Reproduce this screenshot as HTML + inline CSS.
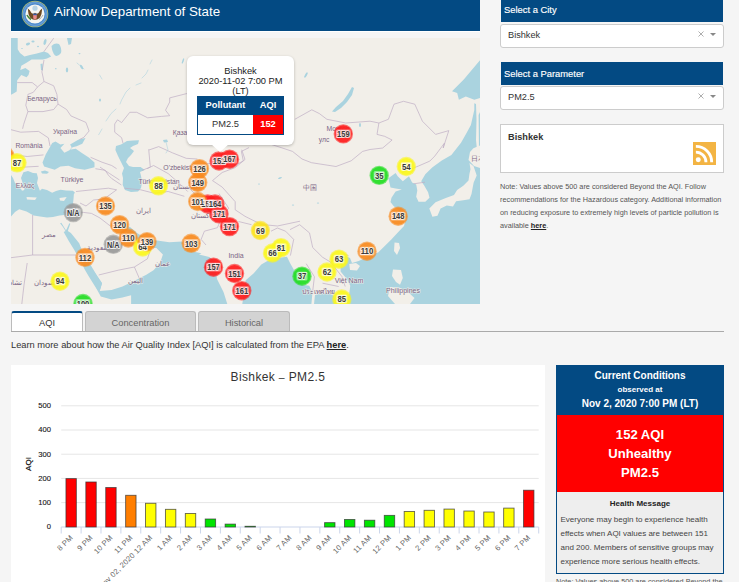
<!DOCTYPE html>
<html><head><meta charset="utf-8">
<style>
*{box-sizing:border-box;margin:0;padding:0}
html,body{width:739px;height:582px;overflow:hidden;background:#f5f5f5;font-family:"Liberation Sans",sans-serif;color:#333}
.abs{position:absolute}
#hdr{left:11px;top:0;width:469px;height:32px;background:#034a83;border-bottom:1px solid #fff}
#hdr .t{left:43px;top:4px;font-size:13.35px;color:#fff;white-space:nowrap;line-height:16px}
#map{left:11px;top:38px;width:469px;height:266px;overflow:hidden;background:#f2efe9}
.bh{background:#034a83;color:#fff;font-size:9.4px;line-height:12px;padding-left:3px;-webkit-text-stroke:0.15px #fff;white-space:nowrap}
.sel{background:#fff;border:1px solid #ccc;border-radius:3px;font-size:9.2px;color:#333;padding-left:7px;white-space:nowrap}
.note{font-size:7.3px;line-height:13px;color:#555;white-space:nowrap}
.tab{top:311px;height:21px;border:1px solid #bbb;border-bottom:none;border-radius:3px 3px 0 0;background:#d3d3d3;font-size:9.3px;color:#666;text-align:center;line-height:21px;padding-top:1px}
</style></head><body>
<div id="hdr" class="abs">
  <svg class="abs" style="left:9.5px;top:0.4px" width="28" height="28" viewBox="0 0 28 28">
    <circle cx="14" cy="14" r="13.3" fill="#b9c06a"/>
    <circle cx="14" cy="14" r="12.6" fill="#4a88cc"/>
    <circle cx="14" cy="14" r="11.3" fill="none" stroke="#6aa0d8" stroke-width="1.2"/>
    <circle cx="14" cy="14" r="9.6" fill="#f6f6f2"/>
    <circle cx="14" cy="8.2" r="2.6" fill="#b8d4e6"/>
    <path d="M6.8 8.5 Q9 9.5 10.5 13 Q12 14 13 13.5 L14 12.8 L15 13.5 Q16 14 17.5 13 Q19 9.5 21.2 8.5 Q21 14 19 17.5 Q17 19.5 14 20 Q11 19.5 9 17.5 Q7 14 6.8 8.5 Z" fill="#6e4a22"/>
    <path d="M12.2 14.2 h3.6 v3 q0 2 -1.8 2.6 q-1.8 -0.6 -1.8 -2.6 Z" fill="#e88a8a"/>
    <rect x="12.2" y="13.6" width="3.6" height="1.6" fill="#3a5aa0"/>
    <path d="M6 15 Q7.5 18 10 19.5" stroke="#4a8a3a" stroke-width="1.6" fill="none"/>
    <path d="M18 19.5 Q20.5 18 22 15" stroke="#aaa" stroke-width="1" fill="none"/>
  </svg>
  <div class="abs t">AirNow Department of State</div>
</div>

<div id="map" class="abs">
  <svg width="469" height="266" viewBox="11 38 469 266" style="display:block">
<g fill="#aad3df">
<path d="M11 38 L17.7 38 L17.7 49.3 L20 53 L24.4 56.6 L30 55 L36.8 53.5 L44 51.4 L48 53 L51.2 56.6 L47 58.5 L43 59.6 L31.6 59.6 L26.5 62.7 L21.3 65.8 L20.3 70 L25.4 67.9 L29.6 71 L28.5 75 L26.5 77.2 L21.3 75 L17.2 80.3 L16.7 91.6 L13 93.7 L11 94.7 Z"/>
<path d="M51.5 46 Q55 42.5 59 44 Q62 48 61 53 Q58 57 55 55.5 Q52 52 51.5 46 Z"/>
<path d="M67 38 L72 38 L71 44 L68.5 45 Z"/>
<path d="M40.5 64 L42.5 63.5 L43 70.5 L41 70 Z"/>
<path d="M55.5 141.4 L60.4 144.6 L64.4 143.8 L60.4 147.9 L64.4 152.7 L70.9 149.5 L75.8 148.7 L81.5 152.7 L88.8 157.6 L94.5 162.5 L94.5 167.3 L84.7 169.8 L75 168.2 L68.5 165.7 L60.4 166.5 L54.7 169.8 L44.1 166.5 L42.5 162.5 L45.7 154.4 L49 148.7 L52.2 143 Z"/>
<path d="M70.1 144.6 L78.2 139.7 L85.5 138.1 L82.3 143.8 L76.6 146.2 L71.7 147.5 Z"/>
<path d="M40.9 171.5 L45 170.6 L49 172 L47 173.8 L42 173.6 Z"/>
<path d="M11 175 L13 178 L15 183 L19.2 185.6 L22 190.8 L24.4 190 L23 184 L21 178 L23.4 172.2 L28 171 L33 173 L36.8 173.2 L38 178 L37 183 L39.9 190.8 L42 188.7 L47 190 L52.2 192.8 L56 191 L60.5 189.7 L66 190.5 L72.9 190.8 L75 192.8 L73.9 193.9 L73.5 199 L72.9 204.2 L71.5 210 L70.8 214.5 L68.7 214.5 L64 215 L59.5 215.5 L53 217 L47 217.6 L40 216.5 L33.7 215.5 L26.5 211.4 L19.2 209.3 L15 212 L11 216.5 Z"/>
<path d="M60.1 223.2 L63 227 L65.5 231 L63.7 232 L68.9 241.2 L74 249.5 L80 260 L85 270 L89 276.7 L97.1 289.7 L99.7 291 L102 283.2 L96 274 L90 264 L85 255 L81.2 248.5 L79.2 243.3 L70.9 233 L67.8 231 L70.3 223.7 L69.3 223.3 L66.5 229.5 L65.8 230 L61.3 222.8 Z"/>
<path d="M93 270 L102 283.2 L99.7 291 L111.6 289.9 L122.5 286.6 L135.5 280.2 L146.3 274.7 L153.9 270 L160.3 262.2 L162.9 254.5 L156.4 248 L150 248 L155.2 240.3 L169.3 242.2 L182.2 241.6 L195.1 251.9 L201.5 253.2 L199 254.5 L209.3 257 L214.4 260.9 L217 279 L223.5 291.9 L227.3 304 L131.1 304 L131.1 295.3 L122.5 297.5 L111.6 299.6 L100.8 296.4 L97.1 289.7 Z"/>
<path d="M124 225 L130 227 L137 233 L145 238 L152 240 L155.2 240.3 L150 245 L145 244 L138 243 L132 240 L127 233 Z"/>
<path d="M121 144.4 L127 141 L133 140.5 L139 140.3 L138 144 L133 146 L130 148 L134 151 L131 155 L128 158 L126 162 L129 166 L133 167 L140.6 167 L144.7 170 L140 172 L141 176 L142.2 182 L141 188 L138 191.5 L131 192 L125 190 L122.7 185 L123 178 L122 173.6 L124 168 L121 162 L118 156 L115.4 150 L116 146 Z"/>
<path d="M163 140 L167 139.5 L168 142 L164 142.5 Z"/>
<path d="M352 87 L354 88 L352 95 L347 102 L341 108 L335 112 L332 111.5 L336 107 L343 101 L348 94 Z"/>
<path d="M242.3 304 L245.7 280.2 L253.5 273.5 L261.3 264.6 L266.9 261.2 L277 258 L287 256.8 L290 263 L294 270 L297 275 L301.6 284.6 L309.2 285.7 L312.5 292.2 L311.4 304 Z"/>
<path d="M314 304 L315 295 L322 293 L330 293.5 L334 296 L337 304 Z"/>
<path d="M480 304 L347 304 L349.3 293.3 L350.3 285.7 L347 279.2 L340.6 271.6 L340.6 257.6 L345 256 L350 258 L352 263 L358.6 261 L365.8 257.7 L378.4 252.3 L391.1 239.7 L398.3 232 L404 226 L405.5 220 L401 213 L397.7 209.2 L393.6 206.1 L390.5 202 L391.5 197.8 L395.6 191.6 L401.8 189.6 L395.6 188.6 L390.5 187.5 L388.4 178.2 L395.6 173.1 L397.7 176.2 L402.8 181.3 L409 176.2 L412.1 182.4 L416.2 184.4 L417.3 190.6 L416.2 196.8 L418.5 201.8 L425.3 201.8 L429.5 197.7 L428.1 192.2 L424 185.3 L421.2 181.2 L425.3 174.3 L432.2 167.5 L441.8 160.6 L451.4 155.1 L461 142.7 L466 134 L470.9 125 L474.3 110 L474.3 103.2 L476 104 L476.5 120 L476 140 L477 150 L479 150 L478.6 115 L480 112 Z"/>
<path d="M480 60.3 L472.6 68.9 L464 79.2 L452 91.2 L457.2 92.9 L458.9 99.8 L465.8 96.4 L474.3 99.8 L480 98 Z"/>
</g>
<g fill="#f2efe9">
<path d="M430.3 207.4 L435.5 202.3 L445.8 198.1 L454 195 L457.1 189.9 L463.3 185.8 L468.5 180.6 L469.5 173.4 L470.5 169.3 L469.5 163.1 L473.6 166.2 L476.7 175.5 L473.6 182.7 L471.5 194 L469.5 199.2 L463.3 200.2 L456.1 201.2 L453 206.4 L446.8 205.4 L440.6 208.5 L437.5 215.7 L432.4 216.7 L429.3 208.5 Z"/>
<path d="M468.5 160 L470 152 L473.4 148.2 L480 145.5 L480 168 L474 166 Z"/>
<path d="M394.5 242.4 L399 243 L400.1 248 L397 255 L394 251 Z"/>
<path d="M393 269.4 L401 270 L402.8 278 L400 284.8 L396 282 L392 276 Z"/>
<path d="M390 287 L400 288 L408 292 L414.5 298 L410 304 L395 304 L388 296 Z"/>
<path d="M349.3 264 L356 263 L360 266 L357 270.6 L350 270 Z"/>
<path d="M26.5 197 L36.8 197.5 L35 200 L27 199.5 Z"/>
<path d="M59.5 198 L66.7 197 L64 201 L60 200.5 Z"/>
</g>

<g fill="none" stroke="#bfaec4" stroke-width="0.7" stroke-linejoin="round">
<polyline points="53.7,38.2 44,51.5"/>
<polyline points="44,60 41.9,71.9 44,81.5 37.6,86.9"/>
<polyline points="17.2,82.6 32.2,82.6 37.6,86.9"/>
<polyline points="37.6,86.9 33.3,92.3 27.9,94.4"/>
<polyline points="44,81.5 53.7,85.8 56.9,94.4 58,104.1"/>
<polyline points="27.9,94.4 25.8,105.2 27.9,111.6"/>
<polyline points="27.9,111.6 43,111.6 53.7,109.5 58,104.1"/>
<polyline points="58,104.1 66.6,109.5 70.9,115.9 85.9,122.4 89.1,131 83.8,137.4 79.5,139.5"/>
<polyline points="27.9,111.6 23.6,124.5 22.6,128.8"/>
<polyline points="11,129.7 20.7,132.2 38.6,131.4 48.4,137.9 50,146"/>
<polyline points="14.2,154.9 27.2,156.5 43.5,154.9"/>
<polyline points="90.6,157.3 102,162.2 111.7,165.5 116.6,168.7"/>
<polyline points="95.4,168.7 105.2,170.3 108.4,175.2 111.7,178.5 121.4,185"/>
<polyline points="76,191.5 92.2,189.8 108.4,188.2 116.6,189.8"/>
<polyline points="14.2,168.7 24,167.1 38.6,166.3"/>
<polyline points="123,143.2 121.6,137.7 114.7,132.2 114.7,124 117.5,119.8 121.6,122.6 129.8,112.3 136.7,112.3 147.7,117.8 161.4,116.4 169.7,115.7 165.5,110.2 169.7,102 169.7,97.9 186.2,93.7 200,92"/>
<polyline points="149,150 158.7,146.6 172.4,152.8 186.2,158.3 197.4,159"/>
<polyline points="148.7,149.2 150.3,167.1 142.2,170.3"/>
<polyline points="147.1,168.7 153.6,165.5 168.2,173.6 181.2,185 187.7,191.5"/>
<polyline points="124.4,188.2 140.6,189.8 153.6,193.1 168.2,191.5 184.4,196.3"/>
<polyline points="100,167.1 109.7,173.6 119.5,180"/>
<polyline points="202.7,164.4 215.7,162.7 228.7,162.7"/>
<polyline points="241.7,149.7 245,159.5 235.2,167.6 222.2,172.5 212.5,180.6 222.2,187.1 235.2,201.7 235.2,209.8 245,216.3 261.2,224.4 277.4,226 300,221.2"/>
<polyline points="180,185.5 189.7,188.7 197.9,196.8"/>
<polyline points="219,193.6 228.7,208.2 222.2,216.3 217.4,227.7 204.4,231.2 201.1,239.4 206,245"/>
<polyline points="238.5,221.5 251.5,224.7"/>
<polyline points="271,231.2 277.4,228 285.6,231.2 293.7,239.4 290.4,255.6"/>
<polyline points="290,229.6 299.7,224.7 309.5,232.9 312.7,247.5 322.5,257.2 330.6,262.1 343.6,254 348.5,255.6"/>
<polyline points="306.2,263.7 314.4,276.7 312.7,291.3"/>
<polyline points="330.6,262.1 342,276.7 345.2,286.5"/>
<polyline points="322.5,283.2 338.7,286.5"/>
<polyline points="11,257.7 32.6,255 76,255"/>
<polyline points="32.6,215 32.6,255"/>
<polyline points="27.2,263 24,285 21.8,304"/>
<polyline points="80,203 86,206 93.6,200 104,199 116.6,189.8"/>
<polyline points="76,212 83.3,212.4 91.5,213.4 100,218 110,225.8 118,230"/>
<polyline points="98.7,275 118.2,270.2 134.4,267 147.4,258.8 150.7,249.1"/>
<polyline points="134.4,267 139.3,278.3"/>
<polyline points="294.8,119.3 311.8,109.8 319.4,113.6 326.9,119.3 345.8,123 370,121.2 378.9,123 388.4,119.3 394,104.2 403.5,101.3 414.8,104.2 422.4,121.2 435.6,134.4 448.8,130.6 443.2,148 444.4,143.2"/>
<polyline points="378.9,123 377,134.4 384.6,136.3 392.1,140 382.7,148 370,149.5 362.6,151.4 351.2,160.8 336,166.5 311.5,162.7 302,159 292.5,151.4 281.1,147.6 270,144"/>
<polyline points="249,147.6 241.4,151.4 243.3,160.8 230,168.4"/>
<polyline points="402.2,172.5 418.5,166 429.8,161.1 434.7,156.2 444.4,143.2"/>
<polyline points="413.6,183.8 425,182.2"/>
</g>
<g fill="none" stroke="#aad3df" stroke-width="0.7" stroke-opacity="0.8" stroke-linecap="round">
<polyline points="98.7,134.7 102,129"/>
<polyline points="106,121 111,113.6 116,109"/>
<polyline points="120,104 121.6,100 126,92 130,88"/>
<polyline points="136,85 141,83"/>
<polyline points="142,78 146,74 148,70"/>
<polyline points="150,64 152,60"/>
<polyline points="77,63 84,69"/>
<polyline points="99.6,75 102,79"/>
<polyline points="70,150 76,142"/>
<polyline points="166,142 168,150 166,153"/>
</g>
<g fill="#aad3df">
<ellipse cx="28" cy="44" rx="2.2" ry="1.2" transform="rotate(-20 28 44)"/>
<ellipse cx="33" cy="41.5" rx="1.6" ry="1" transform="rotate(0 33 41.5)"/>
<ellipse cx="45" cy="42" rx="1.4" ry="3" transform="rotate(15 45 42)"/>
<ellipse cx="38" cy="46.5" rx="1" ry="0.8" transform="rotate(0 38 46.5)"/>
<ellipse cx="22" cy="48.5" rx="0.8" ry="0.6" transform="rotate(0 22 48.5)"/>
<ellipse cx="12.5" cy="54.5" rx="1.5" ry="0.8" transform="rotate(0 12.5 54.5)"/>
<ellipse cx="79.5" cy="53.6" rx="1" ry="0.7" transform="rotate(0 79.5 53.6)"/>
<ellipse cx="81.6" cy="67" rx="1.2" ry="2.5" transform="rotate(-30 81.6 67)"/>
<ellipse cx="55.8" cy="68.7" rx="0.8" ry="0.6" transform="rotate(0 55.8 68.7)"/>
<ellipse cx="67" cy="70" rx="1.2" ry="2.4" transform="rotate(0 67 70)"/>
<ellipse cx="100" cy="100" rx="1" ry="1.5" transform="rotate(0 100 100)"/>
<ellipse cx="183" cy="61" rx="0.8" ry="2.8" transform="rotate(20 183 61)"/>
<ellipse cx="250" cy="63" rx="0.8" ry="2.5" transform="rotate(-20 250 63)"/>
<ellipse cx="306" cy="75" rx="1" ry="3" transform="rotate(30 306 75)"/>
<ellipse cx="360" cy="125" rx="1" ry="2" transform="rotate(0 360 125)"/>
<ellipse cx="280" cy="178" rx="2" ry="0.8" transform="rotate(-20 280 178)"/>
<ellipse cx="293" cy="205" rx="1.2" ry="0.6" transform="rotate(0 293 205)"/>
<ellipse cx="318" cy="203" rx="1.2" ry="0.6" transform="rotate(0 318 203)"/>
<ellipse cx="259" cy="184" rx="1" ry="0.6" transform="rotate(0 259 184)"/>
</g>
<g font-family="Liberation Sans" fill="#7b6585" text-anchor="middle" stroke="#f2efe9" stroke-width="1.2" paint-order="stroke" stroke-opacity="0.8">
<text x="42" y="101" font-size="6.8">Беларусь</text>
<text x="65" y="134" font-size="6.8">Україна</text>
<text x="29" y="147.5" font-size="6.8">România</text>
<text x="72" y="182" font-size="7">Türkiye</text>
<text x="25" y="188" font-size="6.8">Ελλάς</text>
<text x="180" y="135" font-size="6.8">Қаза</text>
<text x="181" y="170" font-size="6.8">O'zbekiston</text>
<text x="159" y="184" font-size="6.8">Türkmenistan</text>
<text x="143" y="213" font-size="6.8">ایران</text>
<text x="49" y="237" font-size="6.8">مصر</text>
<text x="100" y="250" font-size="6.8">السعودية</text>
<text x="162" y="266" font-size="6.8">عمان</text>
<text x="135" y="283" font-size="6.8">اليمن</text>
<text x="46" y="285" font-size="6.8">السودان</text>
<text x="15" y="285" font-size="6.8">تشاد</text>
<text x="186" y="189" font-size="6.8">افغانستان</text>
<text x="202" y="218" font-size="6.8">پاکستان</text>
<text x="236" y="257.5" font-size="7">India</text>
<text x="310" y="189.5" font-size="7">中国</text>
<text x="338" y="131" font-size="6.8">Монгол</text>
<text x="324" y="141.5" font-size="6.8">улс</text>
<text x="349" y="283" font-size="7">Việt Nam</text>
<text x="318" y="293.5" font-size="6.8">ประเทศไทย</text>
<text x="403" y="292.5" font-size="7">Philippines</text>
<text x="478" y="161" font-size="7">日本</text>
</g>
<g>
<circle cx="5" cy="156" r="9.7" fill="#f98a1e" fill-opacity="0.6"/><circle cx="5" cy="156" r="8.6" fill="#f98a1e" fill-opacity="0.8"/>
<circle cx="17" cy="162.8" r="9.7" fill="#fbf71c" fill-opacity="0.6"/><circle cx="17" cy="162.8" r="8.6" fill="#fbf71c" fill-opacity="0.8"/>
<circle cx="105.5" cy="206" r="9.7" fill="#f98a1e" fill-opacity="0.6"/><circle cx="105.5" cy="206" r="8.6" fill="#f98a1e" fill-opacity="0.8"/>
<circle cx="73.3" cy="212.6" r="9.7" fill="#9a9a9a" fill-opacity="0.6"/><circle cx="73.3" cy="212.6" r="8.6" fill="#9a9a9a" fill-opacity="0.8"/>
<circle cx="119.6" cy="224.7" r="9.7" fill="#f98a1e" fill-opacity="0.6"/><circle cx="119.6" cy="224.7" r="8.6" fill="#f98a1e" fill-opacity="0.8"/>
<circle cx="113.3" cy="244.3" r="9.7" fill="#9a9a9a" fill-opacity="0.6"/><circle cx="113.3" cy="244.3" r="8.6" fill="#9a9a9a" fill-opacity="0.8"/>
<circle cx="128.3" cy="238" r="9.7" fill="#f98a1e" fill-opacity="0.6"/><circle cx="128.3" cy="238" r="8.6" fill="#f98a1e" fill-opacity="0.8"/>
<circle cx="142.6" cy="247" r="9.7" fill="#fbf71c" fill-opacity="0.6"/><circle cx="142.6" cy="247" r="8.6" fill="#fbf71c" fill-opacity="0.8"/>
<circle cx="147" cy="241.7" r="9.7" fill="#f98a1e" fill-opacity="0.6"/><circle cx="147" cy="241.7" r="8.6" fill="#f98a1e" fill-opacity="0.8"/>
<circle cx="85" cy="257.4" r="9.7" fill="#f98a1e" fill-opacity="0.6"/><circle cx="85" cy="257.4" r="8.6" fill="#f98a1e" fill-opacity="0.8"/>
<circle cx="60" cy="281.2" r="9.7" fill="#fbf71c" fill-opacity="0.6"/><circle cx="60" cy="281.2" r="8.6" fill="#fbf71c" fill-opacity="0.8"/>
<circle cx="83" cy="303.5" r="9.7" fill="#22dd22" fill-opacity="0.6"/><circle cx="83" cy="303.5" r="8.6" fill="#22dd22" fill-opacity="0.8"/>
<circle cx="158.5" cy="185.8" r="9.7" fill="#fbf71c" fill-opacity="0.6"/><circle cx="158.5" cy="185.8" r="8.6" fill="#fbf71c" fill-opacity="0.8"/>
<circle cx="199.5" cy="168.7" r="9.7" fill="#f98a1e" fill-opacity="0.6"/><circle cx="199.5" cy="168.7" r="8.6" fill="#f98a1e" fill-opacity="0.8"/>
<circle cx="197.7" cy="182.5" r="9.7" fill="#f98a1e" fill-opacity="0.6"/><circle cx="197.7" cy="182.5" r="8.6" fill="#f98a1e" fill-opacity="0.8"/>
<circle cx="207.6" cy="204" r="9.7" fill="#ff1a1a" fill-opacity="0.6"/><circle cx="207.6" cy="204" r="8.6" fill="#ff1a1a" fill-opacity="0.8"/>
<circle cx="197.7" cy="201.5" r="9.7" fill="#f98a1e" fill-opacity="0.6"/><circle cx="197.7" cy="201.5" r="8.6" fill="#f98a1e" fill-opacity="0.8"/>
<circle cx="229.5" cy="226.6" r="9.7" fill="#ff1a1a" fill-opacity="0.6"/><circle cx="229.5" cy="226.6" r="8.6" fill="#ff1a1a" fill-opacity="0.8"/>
<circle cx="219" cy="213.9" r="9.7" fill="#ff1a1a" fill-opacity="0.6"/><circle cx="219" cy="213.9" r="8.6" fill="#ff1a1a" fill-opacity="0.8"/>
<circle cx="215" cy="204" r="9.7" fill="#ff1a1a" fill-opacity="0.6"/><circle cx="215" cy="204" r="8.6" fill="#ff1a1a" fill-opacity="0.8"/>
<circle cx="219" cy="161" r="9.7" fill="#ff1a1a" fill-opacity="0.6"/><circle cx="219" cy="161" r="8.6" fill="#ff1a1a" fill-opacity="0.8"/>
<circle cx="229.5" cy="159.2" r="9.7" fill="#ff1a1a" fill-opacity="0.6"/><circle cx="229.5" cy="159.2" r="8.6" fill="#ff1a1a" fill-opacity="0.8"/>
<circle cx="260.4" cy="230.5" r="9.7" fill="#fde21a" fill-opacity="0.6"/><circle cx="260.4" cy="230.5" r="8.6" fill="#fde21a" fill-opacity="0.8"/>
<circle cx="191.2" cy="243.3" r="9.7" fill="#f98a1e" fill-opacity="0.6"/><circle cx="191.2" cy="243.3" r="8.6" fill="#f98a1e" fill-opacity="0.8"/>
<circle cx="213.5" cy="267.2" r="9.7" fill="#ff1a1a" fill-opacity="0.6"/><circle cx="213.5" cy="267.2" r="8.6" fill="#ff1a1a" fill-opacity="0.8"/>
<circle cx="234.5" cy="273.5" r="9.7" fill="#ff1a1a" fill-opacity="0.6"/><circle cx="234.5" cy="273.5" r="8.6" fill="#ff1a1a" fill-opacity="0.8"/>
<circle cx="241.8" cy="290.7" r="9.7" fill="#ff1a1a" fill-opacity="0.6"/><circle cx="241.8" cy="290.7" r="8.6" fill="#ff1a1a" fill-opacity="0.8"/>
<circle cx="281" cy="247.6" r="9.7" fill="#fbf71c" fill-opacity="0.6"/><circle cx="281" cy="247.6" r="8.6" fill="#fbf71c" fill-opacity="0.8"/>
<circle cx="272.5" cy="253" r="9.7" fill="#fbf71c" fill-opacity="0.6"/><circle cx="272.5" cy="253" r="8.6" fill="#fbf71c" fill-opacity="0.8"/>
<circle cx="302" cy="276.2" r="9.7" fill="#22dd22" fill-opacity="0.6"/><circle cx="302" cy="276.2" r="8.6" fill="#22dd22" fill-opacity="0.8"/>
<circle cx="339" cy="259.2" r="9.7" fill="#fbf71c" fill-opacity="0.6"/><circle cx="339" cy="259.2" r="8.6" fill="#fbf71c" fill-opacity="0.8"/>
<circle cx="327" cy="272" r="9.7" fill="#fbf71c" fill-opacity="0.6"/><circle cx="327" cy="272" r="8.6" fill="#fbf71c" fill-opacity="0.8"/>
<circle cx="341.8" cy="299" r="9.7" fill="#fbf71c" fill-opacity="0.6"/><circle cx="341.8" cy="299" r="8.6" fill="#fbf71c" fill-opacity="0.8"/>
<circle cx="367" cy="251.2" r="9.7" fill="#f98a1e" fill-opacity="0.6"/><circle cx="367" cy="251.2" r="8.6" fill="#f98a1e" fill-opacity="0.8"/>
<circle cx="398.2" cy="216.2" r="9.7" fill="#f98a1e" fill-opacity="0.6"/><circle cx="398.2" cy="216.2" r="8.6" fill="#f98a1e" fill-opacity="0.8"/>
<circle cx="379.2" cy="175.4" r="9.7" fill="#22dd22" fill-opacity="0.6"/><circle cx="379.2" cy="175.4" r="8.6" fill="#22dd22" fill-opacity="0.8"/>
<circle cx="406.3" cy="166.5" r="9.7" fill="#fbf71c" fill-opacity="0.6"/><circle cx="406.3" cy="166.5" r="8.6" fill="#fbf71c" fill-opacity="0.8"/>
<circle cx="343.3" cy="133.9" r="9.7" fill="#ff1a1a" fill-opacity="0.6"/><circle cx="343.3" cy="133.9" r="8.6" fill="#ff1a1a" fill-opacity="0.8"/>
</g>
<g font-family="Liberation Sans" font-weight="bold" text-anchor="middle">
<rect x="-0.50" y="151.60" width="11.00" height="8.6" rx="1.5" fill="#fff" fill-opacity="0.45"/>
<text x="5" y="159.2" font-size="9" textLength="8.6" lengthAdjust="spacingAndGlyphs" fill="#3a3a3a" stroke="#fff" stroke-width="1.8" stroke-opacity="0.7" paint-order="stroke">85</text>
<rect x="11.50" y="158.40" width="11.00" height="8.6" rx="1.5" fill="#fff" fill-opacity="0.45"/>
<text x="17" y="166.0" font-size="9" textLength="8.6" lengthAdjust="spacingAndGlyphs" fill="#3a3a3a" stroke="#fff" stroke-width="1.8" stroke-opacity="0.7" paint-order="stroke">87</text>
<rect x="98.00" y="201.60" width="15.00" height="8.6" rx="1.5" fill="#fff" fill-opacity="0.45"/>
<text x="105.5" y="209.2" font-size="9" textLength="12.6" lengthAdjust="spacingAndGlyphs" fill="#3a3a3a" stroke="#fff" stroke-width="1.8" stroke-opacity="0.7" paint-order="stroke">135</text>
<rect x="65.80" y="208.20" width="15.00" height="8.6" rx="1.5" fill="#fff" fill-opacity="0.45"/>
<text x="73.3" y="215.79999999999998" font-size="9" textLength="12.6" lengthAdjust="spacingAndGlyphs" fill="#3a3a3a" stroke="#fff" stroke-width="1.8" stroke-opacity="0.7" paint-order="stroke">N/A</text>
<rect x="112.10" y="220.30" width="15.00" height="8.6" rx="1.5" fill="#fff" fill-opacity="0.45"/>
<text x="119.6" y="227.89999999999998" font-size="9" textLength="12.6" lengthAdjust="spacingAndGlyphs" fill="#3a3a3a" stroke="#fff" stroke-width="1.8" stroke-opacity="0.7" paint-order="stroke">120</text>
<rect x="105.80" y="239.90" width="15.00" height="8.6" rx="1.5" fill="#fff" fill-opacity="0.45"/>
<text x="113.3" y="247.5" font-size="9" textLength="12.6" lengthAdjust="spacingAndGlyphs" fill="#3a3a3a" stroke="#fff" stroke-width="1.8" stroke-opacity="0.7" paint-order="stroke">N/A</text>
<rect x="120.80" y="233.60" width="15.00" height="8.6" rx="1.5" fill="#fff" fill-opacity="0.45"/>
<text x="128.3" y="241.2" font-size="9" textLength="12.6" lengthAdjust="spacingAndGlyphs" fill="#3a3a3a" stroke="#fff" stroke-width="1.8" stroke-opacity="0.7" paint-order="stroke">110</text>
<rect x="137.10" y="242.60" width="11.00" height="8.6" rx="1.5" fill="#fff" fill-opacity="0.45"/>
<text x="142.6" y="250.2" font-size="9" textLength="8.6" lengthAdjust="spacingAndGlyphs" fill="#3a3a3a" stroke="#fff" stroke-width="1.8" stroke-opacity="0.7" paint-order="stroke">64</text>
<rect x="139.50" y="237.30" width="15.00" height="8.6" rx="1.5" fill="#fff" fill-opacity="0.45"/>
<text x="147" y="244.89999999999998" font-size="9" textLength="12.6" lengthAdjust="spacingAndGlyphs" fill="#3a3a3a" stroke="#fff" stroke-width="1.8" stroke-opacity="0.7" paint-order="stroke">139</text>
<rect x="77.50" y="253.00" width="15.00" height="8.6" rx="1.5" fill="#fff" fill-opacity="0.45"/>
<text x="85" y="260.59999999999997" font-size="9" textLength="12.6" lengthAdjust="spacingAndGlyphs" fill="#3a3a3a" stroke="#fff" stroke-width="1.8" stroke-opacity="0.7" paint-order="stroke">112</text>
<rect x="54.50" y="276.80" width="11.00" height="8.6" rx="1.5" fill="#fff" fill-opacity="0.45"/>
<text x="60" y="284.4" font-size="9" textLength="8.6" lengthAdjust="spacingAndGlyphs" fill="#3a3a3a" stroke="#fff" stroke-width="1.8" stroke-opacity="0.7" paint-order="stroke">94</text>
<rect x="75.50" y="299.10" width="15.00" height="8.6" rx="1.5" fill="#fff" fill-opacity="0.45"/>
<text x="83" y="306.7" font-size="9" textLength="12.6" lengthAdjust="spacingAndGlyphs" fill="#3a3a3a" stroke="#fff" stroke-width="1.8" stroke-opacity="0.7" paint-order="stroke">100</text>
<rect x="153.00" y="181.40" width="11.00" height="8.6" rx="1.5" fill="#fff" fill-opacity="0.45"/>
<text x="158.5" y="189.0" font-size="9" textLength="8.6" lengthAdjust="spacingAndGlyphs" fill="#3a3a3a" stroke="#fff" stroke-width="1.8" stroke-opacity="0.7" paint-order="stroke">88</text>
<rect x="192.00" y="164.30" width="15.00" height="8.6" rx="1.5" fill="#fff" fill-opacity="0.45"/>
<text x="199.5" y="171.89999999999998" font-size="9" textLength="12.6" lengthAdjust="spacingAndGlyphs" fill="#3a3a3a" stroke="#fff" stroke-width="1.8" stroke-opacity="0.7" paint-order="stroke">126</text>
<rect x="190.20" y="178.10" width="15.00" height="8.6" rx="1.5" fill="#fff" fill-opacity="0.45"/>
<text x="197.7" y="185.7" font-size="9" textLength="12.6" lengthAdjust="spacingAndGlyphs" fill="#3a3a3a" stroke="#fff" stroke-width="1.8" stroke-opacity="0.7" paint-order="stroke">149</text>
<rect x="200.10" y="199.60" width="15.00" height="8.6" rx="1.5" fill="#fff" fill-opacity="0.45"/>
<text x="207.6" y="207.2" font-size="9" textLength="12.6" lengthAdjust="spacingAndGlyphs" fill="#3a3a3a" stroke="#fff" stroke-width="1.8" stroke-opacity="0.7" paint-order="stroke">151</text>
<rect x="190.20" y="197.10" width="15.00" height="8.6" rx="1.5" fill="#fff" fill-opacity="0.45"/>
<text x="197.7" y="204.7" font-size="9" textLength="12.6" lengthAdjust="spacingAndGlyphs" fill="#3a3a3a" stroke="#fff" stroke-width="1.8" stroke-opacity="0.7" paint-order="stroke">101</text>
<rect x="222.00" y="222.20" width="15.00" height="8.6" rx="1.5" fill="#fff" fill-opacity="0.45"/>
<text x="229.5" y="229.79999999999998" font-size="9" textLength="12.6" lengthAdjust="spacingAndGlyphs" fill="#3a3a3a" stroke="#fff" stroke-width="1.8" stroke-opacity="0.7" paint-order="stroke">171</text>
<rect x="211.50" y="209.50" width="15.00" height="8.6" rx="1.5" fill="#fff" fill-opacity="0.45"/>
<text x="219" y="217.1" font-size="9" textLength="12.6" lengthAdjust="spacingAndGlyphs" fill="#3a3a3a" stroke="#fff" stroke-width="1.8" stroke-opacity="0.7" paint-order="stroke">171</text>
<rect x="207.50" y="199.60" width="15.00" height="8.6" rx="1.5" fill="#fff" fill-opacity="0.45"/>
<text x="215" y="207.2" font-size="9" textLength="12.6" lengthAdjust="spacingAndGlyphs" fill="#3a3a3a" stroke="#fff" stroke-width="1.8" stroke-opacity="0.7" paint-order="stroke">164</text>
<rect x="211.50" y="156.60" width="15.00" height="8.6" rx="1.5" fill="#fff" fill-opacity="0.45"/>
<text x="219" y="164.2" font-size="9" textLength="12.6" lengthAdjust="spacingAndGlyphs" fill="#3a3a3a" stroke="#fff" stroke-width="1.8" stroke-opacity="0.7" paint-order="stroke">151</text>
<rect x="222.00" y="154.80" width="15.00" height="8.6" rx="1.5" fill="#fff" fill-opacity="0.45"/>
<text x="229.5" y="162.39999999999998" font-size="9" textLength="12.6" lengthAdjust="spacingAndGlyphs" fill="#3a3a3a" stroke="#fff" stroke-width="1.8" stroke-opacity="0.7" paint-order="stroke">167</text>
<rect x="254.90" y="226.10" width="11.00" height="8.6" rx="1.5" fill="#fff" fill-opacity="0.45"/>
<text x="260.4" y="233.7" font-size="9" textLength="8.6" lengthAdjust="spacingAndGlyphs" fill="#3a3a3a" stroke="#fff" stroke-width="1.8" stroke-opacity="0.7" paint-order="stroke">69</text>
<rect x="183.70" y="238.90" width="15.00" height="8.6" rx="1.5" fill="#fff" fill-opacity="0.45"/>
<text x="191.2" y="246.5" font-size="9" textLength="12.6" lengthAdjust="spacingAndGlyphs" fill="#3a3a3a" stroke="#fff" stroke-width="1.8" stroke-opacity="0.7" paint-order="stroke">103</text>
<rect x="206.00" y="262.80" width="15.00" height="8.6" rx="1.5" fill="#fff" fill-opacity="0.45"/>
<text x="213.5" y="270.4" font-size="9" textLength="12.6" lengthAdjust="spacingAndGlyphs" fill="#3a3a3a" stroke="#fff" stroke-width="1.8" stroke-opacity="0.7" paint-order="stroke">157</text>
<rect x="227.00" y="269.10" width="15.00" height="8.6" rx="1.5" fill="#fff" fill-opacity="0.45"/>
<text x="234.5" y="276.7" font-size="9" textLength="12.6" lengthAdjust="spacingAndGlyphs" fill="#3a3a3a" stroke="#fff" stroke-width="1.8" stroke-opacity="0.7" paint-order="stroke">151</text>
<rect x="234.30" y="286.30" width="15.00" height="8.6" rx="1.5" fill="#fff" fill-opacity="0.45"/>
<text x="241.8" y="293.9" font-size="9" textLength="12.6" lengthAdjust="spacingAndGlyphs" fill="#3a3a3a" stroke="#fff" stroke-width="1.8" stroke-opacity="0.7" paint-order="stroke">161</text>
<rect x="275.50" y="243.20" width="11.00" height="8.6" rx="1.5" fill="#fff" fill-opacity="0.45"/>
<text x="281" y="250.79999999999998" font-size="9" textLength="8.6" lengthAdjust="spacingAndGlyphs" fill="#3a3a3a" stroke="#fff" stroke-width="1.8" stroke-opacity="0.7" paint-order="stroke">81</text>
<rect x="267.00" y="248.60" width="11.00" height="8.6" rx="1.5" fill="#fff" fill-opacity="0.45"/>
<text x="272.5" y="256.2" font-size="9" textLength="8.6" lengthAdjust="spacingAndGlyphs" fill="#3a3a3a" stroke="#fff" stroke-width="1.8" stroke-opacity="0.7" paint-order="stroke">66</text>
<rect x="296.50" y="271.80" width="11.00" height="8.6" rx="1.5" fill="#fff" fill-opacity="0.45"/>
<text x="302" y="279.4" font-size="9" textLength="8.6" lengthAdjust="spacingAndGlyphs" fill="#3a3a3a" stroke="#fff" stroke-width="1.8" stroke-opacity="0.7" paint-order="stroke">37</text>
<rect x="333.50" y="254.80" width="11.00" height="8.6" rx="1.5" fill="#fff" fill-opacity="0.45"/>
<text x="339" y="262.4" font-size="9" textLength="8.6" lengthAdjust="spacingAndGlyphs" fill="#3a3a3a" stroke="#fff" stroke-width="1.8" stroke-opacity="0.7" paint-order="stroke">63</text>
<rect x="321.50" y="267.60" width="11.00" height="8.6" rx="1.5" fill="#fff" fill-opacity="0.45"/>
<text x="327" y="275.2" font-size="9" textLength="8.6" lengthAdjust="spacingAndGlyphs" fill="#3a3a3a" stroke="#fff" stroke-width="1.8" stroke-opacity="0.7" paint-order="stroke">62</text>
<rect x="336.30" y="294.60" width="11.00" height="8.6" rx="1.5" fill="#fff" fill-opacity="0.45"/>
<text x="341.8" y="302.2" font-size="9" textLength="8.6" lengthAdjust="spacingAndGlyphs" fill="#3a3a3a" stroke="#fff" stroke-width="1.8" stroke-opacity="0.7" paint-order="stroke">85</text>
<rect x="359.50" y="246.80" width="15.00" height="8.6" rx="1.5" fill="#fff" fill-opacity="0.45"/>
<text x="367" y="254.39999999999998" font-size="9" textLength="12.6" lengthAdjust="spacingAndGlyphs" fill="#3a3a3a" stroke="#fff" stroke-width="1.8" stroke-opacity="0.7" paint-order="stroke">110</text>
<rect x="390.70" y="211.80" width="15.00" height="8.6" rx="1.5" fill="#fff" fill-opacity="0.45"/>
<text x="398.2" y="219.39999999999998" font-size="9" textLength="12.6" lengthAdjust="spacingAndGlyphs" fill="#3a3a3a" stroke="#fff" stroke-width="1.8" stroke-opacity="0.7" paint-order="stroke">148</text>
<rect x="373.70" y="171.00" width="11.00" height="8.6" rx="1.5" fill="#fff" fill-opacity="0.45"/>
<text x="379.2" y="178.6" font-size="9" textLength="8.6" lengthAdjust="spacingAndGlyphs" fill="#3a3a3a" stroke="#fff" stroke-width="1.8" stroke-opacity="0.7" paint-order="stroke">35</text>
<rect x="400.80" y="162.10" width="11.00" height="8.6" rx="1.5" fill="#fff" fill-opacity="0.45"/>
<text x="406.3" y="169.7" font-size="9" textLength="8.6" lengthAdjust="spacingAndGlyphs" fill="#3a3a3a" stroke="#fff" stroke-width="1.8" stroke-opacity="0.7" paint-order="stroke">54</text>
<rect x="335.80" y="129.50" width="15.00" height="8.6" rx="1.5" fill="#fff" fill-opacity="0.45"/>
<text x="343.3" y="137.1" font-size="9" textLength="12.6" lengthAdjust="spacingAndGlyphs" fill="#3a3a3a" stroke="#fff" stroke-width="1.8" stroke-opacity="0.7" paint-order="stroke">159</text>
</g>
</svg>
</div>


<div class="abs" style="left:187px;top:56px;width:107px;height:89px;background:#fff;border-radius:6px;box-shadow:0 1px 3px rgba(0,0,0,.25)">
  <div class="abs" style="left:0;top:9.8px;width:107px;text-align:center;font-size:9.3px;line-height:10px;color:#222">Bishkek<br>2020-11-02 7:00 PM<br>(LT)</div>
  <div class="abs" style="left:10px;top:40px;width:87px;height:39px;border:1px solid #034a83;background:#fff">
    <div class="abs" style="left:0;top:0;width:85px;height:18px;background:#034a83"></div>
    <div class="abs" style="left:0;top:3px;width:55px;text-align:center;color:#fff;font-weight:bold;font-size:9.3px">Pollutant</div>
    <div class="abs" style="left:55px;top:3px;width:30px;text-align:center;color:#fff;font-weight:bold;font-size:9.3px">AQI</div>
    <div class="abs" style="left:55px;top:18px;width:30px;height:19px;background:#f00"></div>
    <div class="abs" style="left:0;top:22px;width:55px;text-align:center;color:#333;font-size:9.3px">PM2.5</div>
    <div class="abs" style="left:55px;top:22px;width:30px;text-align:center;color:#fff;font-weight:bold;font-size:9.3px">152</div>
  </div>
</div>
<svg class="abs" style="left:211px;top:144px" width="18" height="9"><path d="M0 0 L9 8 L18 0 Z" fill="#fff"/></svg>
<!-- right panel -->
<div class="abs bh" style="left:501px;top:0;width:222px;height:22px;line-height:20px">Select a City</div>
<div class="abs sel" style="left:500px;top:24px;width:224px;height:24px;line-height:21px">Bishkek</div>
<svg class="abs" style="left:697px;top:30px" width="22" height="8"><path d="M1.5 1.5 L6.5 6.5 M6.5 1.5 L1.5 6.5" stroke="#aaa" stroke-width="0.95"/><path d="M13 3 L19 3 L16 6 Z" fill="#888"/></svg>
<div class="abs bh" style="left:501px;top:62px;width:222px;height:23px;line-height:24px">Select a Parameter</div>
<div class="abs sel" style="left:500px;top:86px;width:224px;height:24px;line-height:21px">PM2.5</div>
<svg class="abs" style="left:697px;top:92px" width="22" height="8"><path d="M1.5 1.5 L6.5 6.5 M6.5 1.5 L1.5 6.5" stroke="#aaa" stroke-width="0.95"/><path d="M13 3 L19 3 L16 6 Z" fill="#888"/></svg>
<div class="abs" style="left:500px;top:124px;width:224px;height:49px;background:#fff;border:1px solid #ccc">
  <div class="abs" style="left:7px;top:7px;font-size:9.2px;font-weight:bold;color:#333">Bishkek</div>
  <svg class="abs" style="left:192px;top:17px" width="23" height="23" viewBox="0 0 24 24"><rect width="24" height="24" fill="#f3b443"/><circle cx="5.5" cy="18.5" r="2.6" fill="#fff"/><path d="M3 10.5 A10.5 10.5 0 0 1 13.5 21" stroke="#fff" stroke-width="3" fill="none"/><path d="M3 4.5 A16.5 16.5 0 0 1 19.5 21" stroke="#fff" stroke-width="3" fill="none"/></svg>
</div>
<div class="abs note" style="left:500px;top:180px">Note: Values above 500 are considered Beyond the AQI. Follow<br>recommendations for the Hazardous category. Additional information<br>on reducing exposure to extremely high levels of particle pollution is<br>available <b style="color:#222;text-decoration:underline">here</b>.</div>

<!-- tabs -->
<div class="abs tab" style="left:11px;width:72px;background:#fff;border-top:2px solid #034a83;color:#333;padding-top:0">AQI</div>
<div class="abs tab" style="left:85px;width:111px">Concentration</div>
<div class="abs tab" style="left:198px;width:92px">Historical</div>
<div class="abs" style="left:11px;top:331px;width:713px;height:1px;background:#aaa"></div>
<div class="abs" style="left:11px;top:340px;font-size:9.3px;color:#333;white-space:nowrap">Learn more about how the Air Quality Index [AQI] is calculated from the EPA <b style="color:#222;text-decoration:underline">here</b>.</div>

<!-- chart -->
<!--CHART-->
<svg class="abs" style="left:11px;top:365px" width="534" height="217" viewBox="11 365 534 217">
<rect x="11" y="365" width="534" height="217" fill="#fff"/>
<text x="230.6" y="380.9" font-size="12" letter-spacing="0.36" fill="#333">Bishkek <tspan font-size="10.5" dy="-0.3">–</tspan><tspan dy="0.3"> PM2.5</tspan></text>
<rect x="61.2" y="405.3" width="477.50000000000006" height="1" fill="#e6e6e6"/>
<rect x="61.2" y="429.5" width="477.50000000000006" height="1" fill="#e6e6e6"/>
<rect x="61.2" y="453.7" width="477.50000000000006" height="1" fill="#e6e6e6"/>
<rect x="61.2" y="477.9" width="477.50000000000006" height="1" fill="#e6e6e6"/>
<rect x="61.2" y="502.1" width="477.50000000000006" height="1" fill="#e6e6e6"/>
<text x="51" y="408.2" font-size="7.6" text-anchor="end" fill="#111" stroke="#111" stroke-width="0.1">500</text>
<text x="51" y="432.4" font-size="7.6" text-anchor="end" fill="#111" stroke="#111" stroke-width="0.1">400</text>
<text x="51" y="456.6" font-size="7.6" text-anchor="end" fill="#111" stroke="#111" stroke-width="0.1">300</text>
<text x="51" y="480.8" font-size="7.6" text-anchor="end" fill="#111" stroke="#111" stroke-width="0.1">200</text>
<text x="51" y="505.0" font-size="7.6" text-anchor="end" fill="#111" stroke="#111" stroke-width="0.1">100</text>
<text x="51" y="529.2" font-size="7.6" text-anchor="end" fill="#111" stroke="#111" stroke-width="0.1">0</text>
<text transform="translate(30.5 464) rotate(-90)" font-size="8" text-anchor="middle" fill="#111" stroke="#111" stroke-width="0.2">AQI</text>
<rect x="61.2" y="526.5" width="477.50000000000006" height="1" fill="#ccd6eb"/>
<rect x="60.70" y="527.0" width="1" height="6.5" fill="#ccd6eb"/>
<rect x="80.60" y="527.0" width="1" height="6.5" fill="#ccd6eb"/>
<rect x="100.49" y="527.0" width="1" height="6.5" fill="#ccd6eb"/>
<rect x="120.39" y="527.0" width="1" height="6.5" fill="#ccd6eb"/>
<rect x="140.28" y="527.0" width="1" height="6.5" fill="#ccd6eb"/>
<rect x="160.18" y="527.0" width="1" height="6.5" fill="#ccd6eb"/>
<rect x="180.08" y="527.0" width="1" height="6.5" fill="#ccd6eb"/>
<rect x="199.97" y="527.0" width="1" height="6.5" fill="#ccd6eb"/>
<rect x="219.87" y="527.0" width="1" height="6.5" fill="#ccd6eb"/>
<rect x="239.76" y="527.0" width="1" height="6.5" fill="#ccd6eb"/>
<rect x="259.66" y="527.0" width="1" height="6.5" fill="#ccd6eb"/>
<rect x="279.55" y="527.0" width="1" height="6.5" fill="#ccd6eb"/>
<rect x="299.45" y="527.0" width="1" height="6.5" fill="#ccd6eb"/>
<rect x="319.35" y="527.0" width="1" height="6.5" fill="#ccd6eb"/>
<rect x="339.24" y="527.0" width="1" height="6.5" fill="#ccd6eb"/>
<rect x="359.14" y="527.0" width="1" height="6.5" fill="#ccd6eb"/>
<rect x="379.03" y="527.0" width="1" height="6.5" fill="#ccd6eb"/>
<rect x="398.93" y="527.0" width="1" height="6.5" fill="#ccd6eb"/>
<rect x="418.83" y="527.0" width="1" height="6.5" fill="#ccd6eb"/>
<rect x="438.72" y="527.0" width="1" height="6.5" fill="#ccd6eb"/>
<rect x="458.62" y="527.0" width="1" height="6.5" fill="#ccd6eb"/>
<rect x="478.51" y="527.0" width="1" height="6.5" fill="#ccd6eb"/>
<rect x="498.41" y="527.0" width="1" height="6.5" fill="#ccd6eb"/>
<rect x="518.30" y="527.0" width="1" height="6.5" fill="#ccd6eb"/>
<rect x="538.20" y="527.0" width="1" height="6.5" fill="#ccd6eb"/>
<rect x="65.95" y="478.60" width="10.4" height="48.40" fill="#ff0000" stroke="#333" stroke-opacity="0.75" stroke-width="0.9"/>
<rect x="85.84" y="481.99" width="10.4" height="45.01" fill="#ff0000" stroke="#333" stroke-opacity="0.75" stroke-width="0.9"/>
<rect x="105.74" y="487.55" width="10.4" height="39.45" fill="#ff0000" stroke="#333" stroke-opacity="0.75" stroke-width="0.9"/>
<rect x="125.64" y="495.30" width="10.4" height="31.70" fill="#ff7e00" stroke="#333" stroke-opacity="0.75" stroke-width="0.9"/>
<rect x="145.53" y="503.28" width="10.4" height="23.72" fill="#ffff00" stroke="#333" stroke-opacity="0.75" stroke-width="0.9"/>
<rect x="165.43" y="509.33" width="10.4" height="17.67" fill="#ffff00" stroke="#333" stroke-opacity="0.75" stroke-width="0.9"/>
<rect x="185.32" y="513.45" width="10.4" height="13.55" fill="#ffff00" stroke="#333" stroke-opacity="0.75" stroke-width="0.9"/>
<rect x="205.22" y="519.01" width="10.4" height="7.99" fill="#00e400" stroke="#333" stroke-opacity="0.75" stroke-width="0.9"/>
<rect x="225.11" y="524.10" width="10.4" height="2.90" fill="#00e400" stroke="#333" stroke-opacity="0.75" stroke-width="0.9"/>
<rect x="245.01" y="526.27" width="10.4" height="0.73" fill="#00e400" stroke="#333" stroke-opacity="0.75" stroke-width="0.9"/>
<rect x="324.59" y="522.64" width="10.4" height="4.36" fill="#00e400" stroke="#333" stroke-opacity="0.75" stroke-width="0.9"/>
<rect x="344.49" y="519.50" width="10.4" height="7.50" fill="#00e400" stroke="#333" stroke-opacity="0.75" stroke-width="0.9"/>
<rect x="364.39" y="520.22" width="10.4" height="6.78" fill="#00e400" stroke="#333" stroke-opacity="0.75" stroke-width="0.9"/>
<rect x="384.28" y="515.38" width="10.4" height="11.62" fill="#00e400" stroke="#333" stroke-opacity="0.75" stroke-width="0.9"/>
<rect x="404.18" y="511.51" width="10.4" height="15.49" fill="#ffff00" stroke="#333" stroke-opacity="0.75" stroke-width="0.9"/>
<rect x="424.07" y="510.30" width="10.4" height="16.70" fill="#ffff00" stroke="#333" stroke-opacity="0.75" stroke-width="0.9"/>
<rect x="443.97" y="509.09" width="10.4" height="17.91" fill="#ffff00" stroke="#333" stroke-opacity="0.75" stroke-width="0.9"/>
<rect x="463.86" y="511.03" width="10.4" height="15.97" fill="#ffff00" stroke="#333" stroke-opacity="0.75" stroke-width="0.9"/>
<rect x="483.76" y="512.00" width="10.4" height="15.00" fill="#ffff00" stroke="#333" stroke-opacity="0.75" stroke-width="0.9"/>
<rect x="503.66" y="508.12" width="10.4" height="18.88" fill="#ffff00" stroke="#333" stroke-opacity="0.75" stroke-width="0.9"/>
<rect x="523.55" y="490.22" width="10.4" height="36.78" fill="#ff0000" stroke="#333" stroke-opacity="0.75" stroke-width="0.9"/>
<text transform="translate(73.35 538.2) rotate(-45)" font-size="7.6" letter-spacing="0.2" text-anchor="end" fill="#666">8 PM</text>
<text transform="translate(93.24 538.2) rotate(-45)" font-size="7.6" letter-spacing="0.2" text-anchor="end" fill="#666">9 PM</text>
<text transform="translate(113.14 538.2) rotate(-45)" font-size="7.6" letter-spacing="0.2" text-anchor="end" fill="#666">10 PM</text>
<text transform="translate(133.04 538.2) rotate(-45)" font-size="7.6" letter-spacing="0.2" text-anchor="end" fill="#666">11 PM</text>
<text transform="translate(152.93 538.2) rotate(-45)" font-size="7.6" letter-spacing="0.2" text-anchor="end" fill="#666">Nov 02, 2020 12 AM</text>
<text transform="translate(172.83 538.2) rotate(-45)" font-size="7.6" letter-spacing="0.2" text-anchor="end" fill="#666">1 AM</text>
<text transform="translate(192.72 538.2) rotate(-45)" font-size="7.6" letter-spacing="0.2" text-anchor="end" fill="#666">2 AM</text>
<text transform="translate(212.62 538.2) rotate(-45)" font-size="7.6" letter-spacing="0.2" text-anchor="end" fill="#666">3 AM</text>
<text transform="translate(232.51 538.2) rotate(-45)" font-size="7.6" letter-spacing="0.2" text-anchor="end" fill="#666">4 AM</text>
<text transform="translate(252.41 538.2) rotate(-45)" font-size="7.6" letter-spacing="0.2" text-anchor="end" fill="#666">5 AM</text>
<text transform="translate(272.31 538.2) rotate(-45)" font-size="7.6" letter-spacing="0.2" text-anchor="end" fill="#666">6 AM</text>
<text transform="translate(292.20 538.2) rotate(-45)" font-size="7.6" letter-spacing="0.2" text-anchor="end" fill="#666">7 AM</text>
<text transform="translate(312.10 538.2) rotate(-45)" font-size="7.6" letter-spacing="0.2" text-anchor="end" fill="#666">8 AM</text>
<text transform="translate(331.99 538.2) rotate(-45)" font-size="7.6" letter-spacing="0.2" text-anchor="end" fill="#666">9 AM</text>
<text transform="translate(351.89 538.2) rotate(-45)" font-size="7.6" letter-spacing="0.2" text-anchor="end" fill="#666">10 AM</text>
<text transform="translate(371.79 538.2) rotate(-45)" font-size="7.6" letter-spacing="0.2" text-anchor="end" fill="#666">11 AM</text>
<text transform="translate(391.68 538.2) rotate(-45)" font-size="7.6" letter-spacing="0.2" text-anchor="end" fill="#666">12 PM</text>
<text transform="translate(411.58 538.2) rotate(-45)" font-size="7.6" letter-spacing="0.2" text-anchor="end" fill="#666">1 PM</text>
<text transform="translate(431.47 538.2) rotate(-45)" font-size="7.6" letter-spacing="0.2" text-anchor="end" fill="#666">2 PM</text>
<text transform="translate(451.37 538.2) rotate(-45)" font-size="7.6" letter-spacing="0.2" text-anchor="end" fill="#666">3 PM</text>
<text transform="translate(471.26 538.2) rotate(-45)" font-size="7.6" letter-spacing="0.2" text-anchor="end" fill="#666">4 PM</text>
<text transform="translate(491.16 538.2) rotate(-45)" font-size="7.6" letter-spacing="0.2" text-anchor="end" fill="#666">5 PM</text>
<text transform="translate(511.06 538.2) rotate(-45)" font-size="7.6" letter-spacing="0.2" text-anchor="end" fill="#666">6 PM</text>
<text transform="translate(530.95 538.2) rotate(-45)" font-size="7.6" letter-spacing="0.2" text-anchor="end" fill="#666">7 PM</text>
</svg>
<!--/CHART-->

<!-- current conditions -->
<div class="abs" style="left:556px;top:365px;width:168px;height:209px;border:1px solid #034a83;background:#eee">
  <div class="abs" style="left:0;top:0;width:166px;height:49px;background:#034a83;color:#fff;text-align:center;font-weight:bold">
    <div style="font-size:10px;line-height:12px;padding-top:4px">Current Conditions</div>
    <div style="font-size:8px;line-height:16px">observed at</div>
    <div style="font-size:10px;line-height:11px">Nov 2, 2020 7:00 PM (LT)</div>
  </div>
  <div class="abs" style="left:0;top:49px;width:166px;height:77px;background:#f00;color:#fff;text-align:center;font-weight:bold;font-size:13.1px;line-height:19px;padding-top:10px">152 AQI<br>Unhealthy<br>PM2.5</div>
  <div class="abs" style="left:0;top:132.5px;width:166px;text-align:center;font-weight:bold;font-size:8px;color:#222">Health Message</div>
  <div class="abs" style="left:3.5px;top:146.5px;font-size:8px;line-height:14px;color:#444;white-space:nowrap">Everyone may begin to experience health<br>effects when AQI values are between 151<br>and 200. Members of sensitive groups may<br>experience more serious health effects.</div>
</div>
<div class="abs note" style="left:556px;top:575px;font-size:7.3px">Note: Values above 500 are considered Beyond the</div>
</body></html>
